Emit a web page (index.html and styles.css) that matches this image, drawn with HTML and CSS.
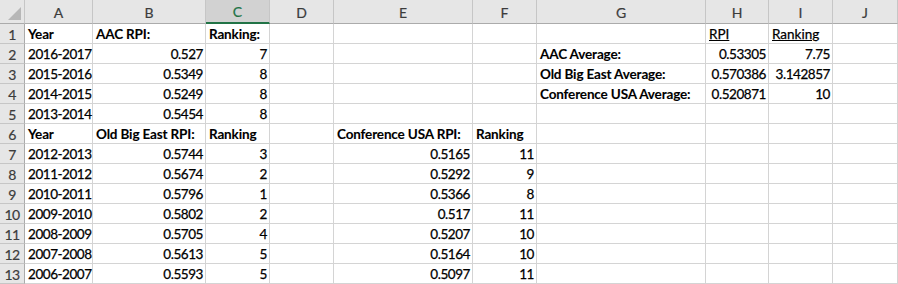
FILE: index.html
```html
<!DOCTYPE html>
<html>
<head>
<meta charset="utf-8">
<link rel="stylesheet" href="styles.css">
</head>
<body>
<div class="sheet">
  <div class="corner"><span class="tri"></span></div>
  <div class="ch">A</div><div class="ch">B</div><div class="ch sel">C</div><div class="ch">D</div><div class="ch">E</div><div class="ch">F</div><div class="ch">G</div><div class="ch">H</div><div class="ch">I</div><div class="ch">J</div>

  <div class="rh">1</div>
  <div class="c b">Year</div><div class="c b">AAC RPI:</div><div class="c b">Ranking:</div><div class="c"></div><div class="c"></div><div class="c"></div><div class="c"></div><div class="c u">RPI</div><div class="c u">Ranking</div><div class="c"></div>

  <div class="rh">2</div>
  <div class="c">2016-2017</div><div class="c n">0.527</div><div class="c n">7</div><div class="c"></div><div class="c"></div><div class="c"></div><div class="c b">AAC Average:</div><div class="c n">0.53305</div><div class="c n">7.75</div><div class="c"></div>

  <div class="rh">3</div>
  <div class="c">2015-2016</div><div class="c n">0.5349</div><div class="c n">8</div><div class="c"></div><div class="c"></div><div class="c"></div><div class="c b">Old Big East Average:</div><div class="c n">0.570386</div><div class="c n">3.142857</div><div class="c"></div>

  <div class="rh">4</div>
  <div class="c">2014-2015</div><div class="c n">0.5249</div><div class="c n">8</div><div class="c"></div><div class="c"></div><div class="c"></div><div class="c b">Conference USA Average:</div><div class="c n">0.520871</div><div class="c n">10</div><div class="c"></div>

  <div class="rh">5</div>
  <div class="c">2013-2014</div><div class="c n">0.5454</div><div class="c n">8</div><div class="c"></div><div class="c"></div><div class="c"></div><div class="c"></div><div class="c"></div><div class="c"></div><div class="c"></div>

  <div class="rh">6</div>
  <div class="c b">Year</div><div class="c b">Old Big East RPI:</div><div class="c b">Ranking</div><div class="c"></div><div class="c b">Conference USA RPI:</div><div class="c b">Ranking</div><div class="c"></div><div class="c"></div><div class="c"></div><div class="c"></div>

  <div class="rh">7</div>
  <div class="c">2012-2013</div><div class="c n">0.5744</div><div class="c n">3</div><div class="c"></div><div class="c n">0.5165</div><div class="c n">11</div><div class="c"></div><div class="c"></div><div class="c"></div><div class="c"></div>

  <div class="rh">8</div>
  <div class="c">2011-2012</div><div class="c n">0.5674</div><div class="c n">2</div><div class="c"></div><div class="c n">0.5292</div><div class="c n">9</div><div class="c"></div><div class="c"></div><div class="c"></div><div class="c"></div>

  <div class="rh">9</div>
  <div class="c">2010-2011</div><div class="c n">0.5796</div><div class="c n">1</div><div class="c"></div><div class="c n">0.5366</div><div class="c n">8</div><div class="c"></div><div class="c"></div><div class="c"></div><div class="c"></div>

  <div class="rh">10</div>
  <div class="c">2009-2010</div><div class="c n">0.5802</div><div class="c n">2</div><div class="c"></div><div class="c n">0.517</div><div class="c n">11</div><div class="c"></div><div class="c"></div><div class="c"></div><div class="c"></div>

  <div class="rh">11</div>
  <div class="c">2008-2009</div><div class="c n">0.5705</div><div class="c n">4</div><div class="c"></div><div class="c n">0.5207</div><div class="c n">10</div><div class="c"></div><div class="c"></div><div class="c"></div><div class="c"></div>

  <div class="rh">12</div>
  <div class="c">2007-2008</div><div class="c n">0.5613</div><div class="c n">5</div><div class="c"></div><div class="c n">0.5164</div><div class="c n">10</div><div class="c"></div><div class="c"></div><div class="c"></div><div class="c"></div>

  <div class="rh">13</div>
  <div class="c">2006-2007</div><div class="c n">0.5593</div><div class="c n">5</div><div class="c"></div><div class="c n">0.5097</div><div class="c n">11</div><div class="c"></div><div class="c"></div><div class="c"></div><div class="c"></div>
</div>
</body>
</html>
```
FILE: styles.css
```css
html, body {
  margin: 0;
  padding: 0;
  background: #ffffff;
}
body {
  width: 898px;
  height: 284px;
  overflow: hidden;
  font-family: Lato, "Liberation Sans", sans-serif;
  font-size: 13.5px;
  color: #000;
}
.sheet {
  display: grid;
  grid-template-columns: 25px 68px 113px 64px 64px 139px 64px 169px 63px 64px 63px 2px;
  grid-auto-rows: 20px;
  grid-template-rows: 24px;
}
.corner {
  grid-column: 1;
  background: #e6e6e6;
  border-right: 1px solid #c6c6c6;
  border-bottom: 1px solid #ababab;
  position: relative;
  box-sizing: border-box;
}
.tri {
  position: absolute;
  right: 3px;
  bottom: 3px;
  width: 0;
  height: 0;
  border-left: 13px solid transparent;
  border-bottom: 13px solid #b7b7b7;
}
.ch {
  background: #e6e6e6;
  color: #3c3c3c;
  border-right: 1px solid #c6c6c6;
  border-bottom: 1px solid #ababab;
  box-sizing: border-box;
  display: flex;
  align-items: center;
  justify-content: center;
  padding-top: 1px;
  font-size: 14px;
  -webkit-text-stroke: 0.2px currentColor;
}
.ch:nth-child(11) {
  grid-column: span 2;
  justify-content: flex-start;
  padding-left: 29px;
}
.ch.sel {
  background: #d2d2d2;
  color: #217346;
  border-bottom: 2px solid #217346;
}
.rh {
  grid-column: 1;
  background: #e6e6e6;
  color: #3c3c3c;
  border-right: 1px solid #ababab;
  border-bottom: 1px solid #c6c6c6;
  box-sizing: border-box;
  display: flex;
  align-items: center;
  justify-content: center;
  padding-top: 1px;
  font-size: 14px;
  letter-spacing: -0.6px;
  -webkit-text-stroke: 0.2px currentColor;
}
.c {
  border-right: 1px solid #d4d4d4;
  border-bottom: 1px solid #d4d4d4;
  box-sizing: border-box;
  padding: 0 2px 0 3px;
  white-space: nowrap;
  display: flex;
  align-items: flex-end;
  line-height: 18px;
  overflow: visible;
  letter-spacing: -0.45px;
  -webkit-text-stroke: 0.25px currentColor;
}
.c:nth-child(11n+11) {
  grid-column: span 2;
}
.b { font-weight: bold; letter-spacing: -0.15px; -webkit-text-stroke: 0.1px currentColor; }
.n {
  justify-content: flex-end;
  letter-spacing: -0.45px;
}
.u { text-decoration: underline; letter-spacing: 0; }
```
